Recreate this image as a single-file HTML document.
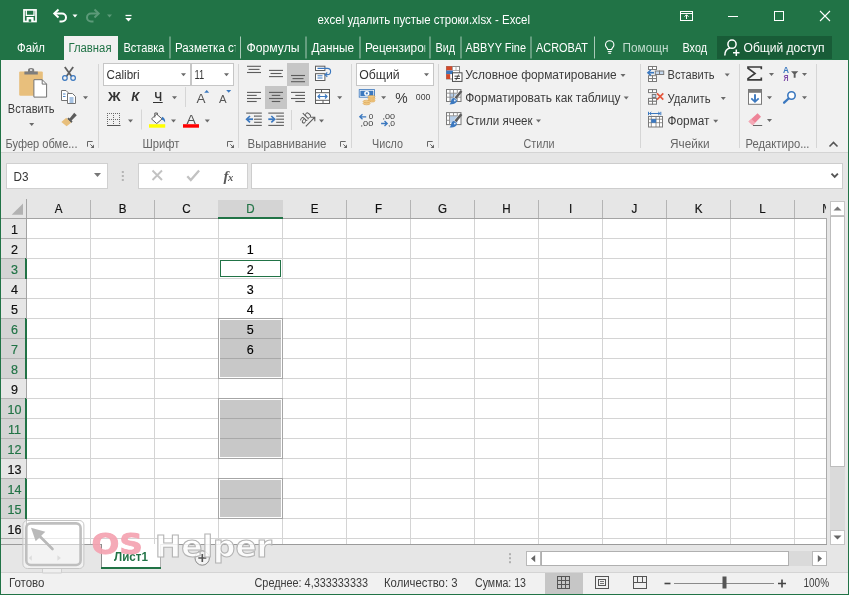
<!DOCTYPE html>
<html lang="ru">
<head>
<meta charset="utf-8">
<title>excel удалить пустые строки.xlsx - Excel</title>
<style>
html,body{margin:0;padding:0;}
body{width:849px;height:595px;overflow:hidden;background:#e6e6e6;font-family:"Liberation Sans",sans-serif;}
#app{position:relative;width:849px;height:595px;overflow:hidden;background:#e6e6e6;}
#app div{position:absolute;box-sizing:border-box;}
#ov{will-change:transform;position:absolute;left:0;top:0;width:849px;height:595px;font-family:"Liberation Sans",sans-serif;font-size:12.3px;fill:#3c3c3c;}
</style>
</head>
<body>
<div id="app">
<div style="left:0px;top:0px;width:849px;height:60px;background:#217346;"></div>
<div style="left:64px;top:36px;width:54px;height:24px;background:#f1f1f1;"></div>
<div style="left:717px;top:36px;width:115px;height:23px;background:#185c37;"></div>
<div style="left:0px;top:60px;width:849px;height:93px;background:#f1f1f1;border-bottom:1px solid #d4d4d4;"></div>
<div style="left:6px;top:163px;width:102px;height:26px;background:#fff;border:1px solid #d0d0d0;"></div>
<div style="left:138px;top:163px;width:110px;height:26px;background:#fff;border:1px solid #d0d0d0;"></div>
<div style="left:251px;top:163px;width:592px;height:26px;background:#fff;border:1px solid #cdcdcd;"></div>
<div style="left:26px;top:218px;width:800px;height:326px;background:#fff;"></div>
<div style="left:1px;top:218px;width:25px;height:326px;background:#e6e6e6;"></div>
<div style="left:90px;top:218px;width:1px;height:326px;background:#d4d4d4;"></div>
<div style="left:90px;top:200px;width:1px;height:18px;background:#b4b4b4;"></div>
<div style="left:154px;top:218px;width:1px;height:326px;background:#d4d4d4;"></div>
<div style="left:154px;top:200px;width:1px;height:18px;background:#b4b4b4;"></div>
<div style="left:218px;top:218px;width:1px;height:326px;background:#d4d4d4;"></div>
<div style="left:218px;top:200px;width:1px;height:18px;background:#b4b4b4;"></div>
<div style="left:282px;top:218px;width:1px;height:326px;background:#d4d4d4;"></div>
<div style="left:282px;top:200px;width:1px;height:18px;background:#b4b4b4;"></div>
<div style="left:346px;top:218px;width:1px;height:326px;background:#d4d4d4;"></div>
<div style="left:346px;top:200px;width:1px;height:18px;background:#b4b4b4;"></div>
<div style="left:410px;top:218px;width:1px;height:326px;background:#d4d4d4;"></div>
<div style="left:410px;top:200px;width:1px;height:18px;background:#b4b4b4;"></div>
<div style="left:474px;top:218px;width:1px;height:326px;background:#d4d4d4;"></div>
<div style="left:474px;top:200px;width:1px;height:18px;background:#b4b4b4;"></div>
<div style="left:538px;top:218px;width:1px;height:326px;background:#d4d4d4;"></div>
<div style="left:538px;top:200px;width:1px;height:18px;background:#b4b4b4;"></div>
<div style="left:602px;top:218px;width:1px;height:326px;background:#d4d4d4;"></div>
<div style="left:602px;top:200px;width:1px;height:18px;background:#b4b4b4;"></div>
<div style="left:666px;top:218px;width:1px;height:326px;background:#d4d4d4;"></div>
<div style="left:666px;top:200px;width:1px;height:18px;background:#b4b4b4;"></div>
<div style="left:730px;top:218px;width:1px;height:326px;background:#d4d4d4;"></div>
<div style="left:730px;top:200px;width:1px;height:18px;background:#b4b4b4;"></div>
<div style="left:794px;top:218px;width:1px;height:326px;background:#d4d4d4;"></div>
<div style="left:794px;top:200px;width:1px;height:18px;background:#b4b4b4;"></div>
<div style="left:26px;top:238px;width:800px;height:1px;background:#d4d4d4;"></div>
<div style="left:1px;top:238px;width:25px;height:1px;background:#ababab;"></div>
<div style="left:26px;top:258px;width:800px;height:1px;background:#d4d4d4;"></div>
<div style="left:1px;top:258px;width:25px;height:1px;background:#ababab;"></div>
<div style="left:26px;top:278px;width:800px;height:1px;background:#d4d4d4;"></div>
<div style="left:1px;top:278px;width:25px;height:1px;background:#ababab;"></div>
<div style="left:26px;top:298px;width:800px;height:1px;background:#d4d4d4;"></div>
<div style="left:1px;top:298px;width:25px;height:1px;background:#ababab;"></div>
<div style="left:26px;top:318px;width:800px;height:1px;background:#d4d4d4;"></div>
<div style="left:1px;top:318px;width:25px;height:1px;background:#ababab;"></div>
<div style="left:26px;top:338px;width:800px;height:1px;background:#d4d4d4;"></div>
<div style="left:1px;top:338px;width:25px;height:1px;background:#ababab;"></div>
<div style="left:26px;top:358px;width:800px;height:1px;background:#d4d4d4;"></div>
<div style="left:1px;top:358px;width:25px;height:1px;background:#ababab;"></div>
<div style="left:26px;top:378px;width:800px;height:1px;background:#d4d4d4;"></div>
<div style="left:1px;top:378px;width:25px;height:1px;background:#ababab;"></div>
<div style="left:26px;top:398px;width:800px;height:1px;background:#d4d4d4;"></div>
<div style="left:1px;top:398px;width:25px;height:1px;background:#ababab;"></div>
<div style="left:26px;top:418px;width:800px;height:1px;background:#d4d4d4;"></div>
<div style="left:1px;top:418px;width:25px;height:1px;background:#ababab;"></div>
<div style="left:26px;top:438px;width:800px;height:1px;background:#d4d4d4;"></div>
<div style="left:1px;top:438px;width:25px;height:1px;background:#ababab;"></div>
<div style="left:26px;top:458px;width:800px;height:1px;background:#d4d4d4;"></div>
<div style="left:1px;top:458px;width:25px;height:1px;background:#ababab;"></div>
<div style="left:26px;top:478px;width:800px;height:1px;background:#d4d4d4;"></div>
<div style="left:1px;top:478px;width:25px;height:1px;background:#ababab;"></div>
<div style="left:26px;top:498px;width:800px;height:1px;background:#d4d4d4;"></div>
<div style="left:1px;top:498px;width:25px;height:1px;background:#ababab;"></div>
<div style="left:26px;top:518px;width:800px;height:1px;background:#d4d4d4;"></div>
<div style="left:1px;top:518px;width:25px;height:1px;background:#ababab;"></div>
<div style="left:26px;top:538px;width:800px;height:1px;background:#d4d4d4;"></div>
<div style="left:1px;top:538px;width:25px;height:1px;background:#ababab;"></div>
<div style="left:218px;top:200px;width:65px;height:18px;background:#d4d4d4;"></div>
<div style="left:1px;top:258px;width:25px;height:21px;background:#d4d4d4;"></div>
<div style="left:1px;top:318px;width:25px;height:21px;background:#d4d4d4;"></div>
<div style="left:1px;top:338px;width:25px;height:21px;background:#d4d4d4;"></div>
<div style="left:1px;top:358px;width:25px;height:21px;background:#d4d4d4;"></div>
<div style="left:1px;top:398px;width:25px;height:21px;background:#d4d4d4;"></div>
<div style="left:1px;top:418px;width:25px;height:21px;background:#d4d4d4;"></div>
<div style="left:1px;top:438px;width:25px;height:21px;background:#d4d4d4;"></div>
<div style="left:1px;top:478px;width:25px;height:21px;background:#d4d4d4;"></div>
<div style="left:1px;top:498px;width:25px;height:21px;background:#d4d4d4;"></div>
<div style="left:1px;top:278px;width:25px;height:1px;background:#b4b4b4;"></div>
<div style="left:1px;top:258px;width:25px;height:1px;background:#b4b4b4;"></div>
<div style="left:1px;top:338px;width:25px;height:1px;background:#b4b4b4;"></div>
<div style="left:1px;top:318px;width:25px;height:1px;background:#b4b4b4;"></div>
<div style="left:1px;top:358px;width:25px;height:1px;background:#b4b4b4;"></div>
<div style="left:1px;top:338px;width:25px;height:1px;background:#b4b4b4;"></div>
<div style="left:1px;top:378px;width:25px;height:1px;background:#b4b4b4;"></div>
<div style="left:1px;top:358px;width:25px;height:1px;background:#b4b4b4;"></div>
<div style="left:1px;top:418px;width:25px;height:1px;background:#b4b4b4;"></div>
<div style="left:1px;top:398px;width:25px;height:1px;background:#b4b4b4;"></div>
<div style="left:1px;top:438px;width:25px;height:1px;background:#b4b4b4;"></div>
<div style="left:1px;top:418px;width:25px;height:1px;background:#b4b4b4;"></div>
<div style="left:1px;top:458px;width:25px;height:1px;background:#b4b4b4;"></div>
<div style="left:1px;top:438px;width:25px;height:1px;background:#b4b4b4;"></div>
<div style="left:1px;top:498px;width:25px;height:1px;background:#b4b4b4;"></div>
<div style="left:1px;top:478px;width:25px;height:1px;background:#b4b4b4;"></div>
<div style="left:1px;top:518px;width:25px;height:1px;background:#b4b4b4;"></div>
<div style="left:1px;top:498px;width:25px;height:1px;background:#b4b4b4;"></div>
<div style="left:25px;top:258px;width:2px;height:21px;background:#217346;"></div>
<div style="left:25px;top:318px;width:2px;height:61px;background:#217346;"></div>
<div style="left:25px;top:398px;width:2px;height:61px;background:#217346;"></div>
<div style="left:25px;top:478px;width:2px;height:41px;background:#217346;"></div>
<div style="left:1px;top:218px;width:825px;height:1px;background:#a3a3a3;"></div>
<div style="left:26px;top:199px;width:1px;height:345px;background:#a3a3a3;"></div>
<div style="left:826px;top:218px;width:1px;height:327px;background:#ababab;"></div>
<div style="left:1px;top:544px;width:826px;height:1px;background:#9b9b9b;"></div>
<div style="left:218px;top:217px;width:65px;height:2px;background:#217346;"></div>
<div style="left:25px;top:259px;width:2px;height:20px;background:#217346;"></div>
<div style="left:25px;top:319px;width:2px;height:60px;background:#217346;"></div>
<div style="left:25px;top:399px;width:2px;height:60px;background:#217346;"></div>
<div style="left:25px;top:479px;width:2px;height:40px;background:#217346;"></div>
<div style="left:218px;top:318px;width:65px;height:61px;background:#fff;border:1px solid #a6a6a6;"></div>
<div style="left:220px;top:320px;width:61px;height:57px;background:#c8c8c8;"></div>
<div style="left:220px;top:338px;width:61px;height:1px;background:#a9a9a9;"></div>
<div style="left:220px;top:358px;width:61px;height:1px;background:#a9a9a9;"></div>
<div style="left:218px;top:398px;width:65px;height:61px;background:#fff;border:1px solid #a6a6a6;"></div>
<div style="left:220px;top:400px;width:61px;height:57px;background:#c8c8c8;"></div>
<div style="left:220px;top:418px;width:61px;height:1px;background:#a9a9a9;"></div>
<div style="left:220px;top:438px;width:61px;height:1px;background:#a9a9a9;"></div>
<div style="left:218px;top:478px;width:65px;height:41px;background:#fff;border:1px solid #a6a6a6;"></div>
<div style="left:220px;top:480px;width:61px;height:37px;background:#c8c8c8;"></div>
<div style="left:220px;top:498px;width:61px;height:1px;background:#a9a9a9;"></div>
<div style="left:219px;top:259px;width:63px;height:19px;background:#fff;"></div>
<div style="left:220px;top:260px;width:61px;height:17px;background:#fff;border:1px solid #217346;"></div>
<div style="left:828px;top:200px;width:20px;height:345px;background:#e6e6e6;"></div>
<div style="left:830px;top:216px;width:15px;height:314px;background:#dadada;"></div>
<div style="left:830px;top:201px;width:15px;height:15px;background:#fff;border:1px solid #c4c4c4;"></div>
<div style="left:830px;top:216px;width:15px;height:251px;background:#fff;border:1px solid #bdbdbd;"></div>
<div style="left:830px;top:530px;width:15px;height:15px;background:#fff;border:1px solid #c4c4c4;"></div>
<div style="left:0px;top:60px;width:1px;height:535px;background:#217346;"></div>
<div style="left:848px;top:60px;width:1px;height:535px;background:#217346;"></div>
<div style="left:0px;top:594px;width:849px;height:1px;background:#217346;"></div>
<div style="left:103px;top:63px;width:88px;height:23px;background:#fff;border:1px solid #c6c6c6;"></div>
<div style="left:191px;top:63px;width:43px;height:23px;background:#fff;border:1px solid #c6c6c6;"></div>
<div style="left:287px;top:63px;width:22px;height:23px;background:#c6c6c6;"></div>
<div style="left:265px;top:86px;width:22px;height:23px;background:#c6c6c6;"></div>
<div style="left:356px;top:63px;width:78px;height:23px;background:#fff;border:1px solid #c6c6c6;"></div>
<div style="left:101px;top:544px;width:60px;height:25px;background:#fff;border-left:1px solid #8c8c8c;border-right:1px solid #b0b0b0;"></div>
<div style="left:101px;top:567px;width:60px;height:2px;background:#217346;"></div>
<div style="left:526px;top:551px;width:15px;height:15px;background:#fff;border:1px solid #b9b9b9;"></div>
<div style="left:541px;top:551px;width:271px;height:15px;background:#dadada;"></div>
<div style="left:541px;top:551px;width:248px;height:15px;background:#fff;border:1px solid #b0b0b0;"></div>
<div style="left:812px;top:551px;width:15px;height:15px;background:#fff;border:1px solid #b9b9b9;"></div>
<div style="left:1px;top:572px;width:847px;height:22px;background:#f1f1f1;border-top:1px solid #d4d4d4;"></div>
<div style="left:545px;top:573px;width:38px;height:21px;background:#c6c6c6;"></div>
<svg id="ov" width="849" height="595" viewBox="0 0 849 595">
<text x="317.5" y="24" fill="#fff" textLength="212.5" lengthAdjust="spacingAndGlyphs">excel удалить пустые строки.xlsx - Excel</text>
<g><rect x="24" y="9.900" width="12" height="11.600" fill="none" stroke="#fff" stroke-width="1.700"/><path d="M26.300 10v5.300h7.700v-5.300" fill="none" stroke="#fff" stroke-width="1.300"/><rect x="26.600" y="17" width="7" height="4.500" fill="#fff"/><rect x="28.700" y="19.300" width="2.500" height="2.500" fill="#217346"/></g>
<g fill="none" stroke="#fff" stroke-width="2"><path d="M55 13.5h7a4 4 0 0 1 0 8h-2.5" /><path d="M58.5 9.5l-4.2 4 4.2 4" /></g>
<path d="M72.5 14.5h5l-2.5 3.0z" fill="#fff"/>
<g fill="none" stroke="#5c9a79" stroke-width="2"><path d="M98 13.5h-7a4 4 0 0 0 0 8h2.5" /><path d="M94.5 9.5l4.2 4 -4.2 4" /></g>
<path d="M107 14.5h5l-2.5 3.0z" fill="#5c9a79"/>
<path d="M125.5 15.5h6" stroke="#fff" stroke-width="1.3"/>
<path d="M125.3 18h6.4l-3.2 3.4z" fill="#fff"/>
<g fill="none" stroke="#fff" stroke-width="1"><rect x="680.5" y="11.5" width="12" height="9"/><path d="M680.5 13.5h12" /><path d="M686.5 19v-4M684.5 16.7l2-2 2 2"/></g>
<path d="M728 16.5h10" stroke="#fff" stroke-width="1"/>
<rect x="774.5" y="11.5" width="9" height="9" fill="none" stroke="#fff"/>
<path d="M820 11l10 10M830 11l-10 10" stroke="#fff" stroke-width="1.1"/>
<text x="17" y="52" fill="#fff" textLength="28" lengthAdjust="spacingAndGlyphs">Файл</text>
<text x="68.5" y="52" fill="#217346" textLength="43" lengthAdjust="spacingAndGlyphs">Главная</text>
<text x="123.5" y="52" fill="#fff" textLength="41" lengthAdjust="spacingAndGlyphs">Вставка</text>
<text x="175" y="52" fill="#fff" textLength="70.5" lengthAdjust="spacingAndGlyphs" clip-path="url(#cl1)">Разметка стр</text>
<text x="246.5" y="52" fill="#fff" textLength="53" lengthAdjust="spacingAndGlyphs">Формулы</text>
<text x="311.5" y="52" fill="#fff" textLength="42.5" lengthAdjust="spacingAndGlyphs">Данные</text>
<text x="365" y="52" fill="#fff" textLength="65" lengthAdjust="spacingAndGlyphs" clip-path="url(#cl2)">Рецензиров</text>
<text x="435.5" y="52" fill="#fff" textLength="19.5" lengthAdjust="spacingAndGlyphs">Вид</text>
<text x="465.5" y="52" fill="#fff" textLength="60.5" lengthAdjust="spacingAndGlyphs">ABBYY Fine</text>
<text x="536" y="52" fill="#fff" textLength="52" lengthAdjust="spacingAndGlyphs">ACROBAT</text>
<text x="622.5" y="52" fill="#c3ddd0" textLength="52.5" lengthAdjust="spacingAndGlyphs" clip-path="url(#cl3)">Помощни</text>
<text x="682.5" y="52" fill="#fff" textLength="24.5" lengthAdjust="spacingAndGlyphs">Вход</text>
<text x="743.5" y="52" fill="#fff" textLength="81" lengthAdjust="spacingAndGlyphs">Общий доступ</text>
<path d="M170 36.5v22" stroke="#a9cab8" stroke-width="1"/>
<path d="M240.5 36.5v22" stroke="#a9cab8" stroke-width="1"/>
<path d="M306 36.5v22" stroke="#a9cab8" stroke-width="1"/>
<path d="M360 36.5v22" stroke="#a9cab8" stroke-width="1"/>
<path d="M430 36.5v22" stroke="#a9cab8" stroke-width="1"/>
<path d="M461 36.5v22" stroke="#a9cab8" stroke-width="1"/>
<path d="M531 36.5v22" stroke="#a9cab8" stroke-width="1"/>
<path d="M594.5 36.5v22" stroke="#a9cab8" stroke-width="1"/>
<defs><clipPath id="cl1"><rect x="170" y="36" width="65.800" height="24"/></clipPath><clipPath id="cl2"><rect x="360" y="36" width="65.200" height="24"/></clipPath><clipPath id="cl3"><rect x="600" y="36" width="68.700" height="24"/></clipPath></defs>
<g fill="none" stroke="#fff" stroke-width="1.1"><path d="M607.8 49.5c0-1.6-2.3-2.4-2.3-4.6a4.2 4.2 0 0 1 8.4 0c0 2.2-2.3 3-2.3 4.6z"/><path d="M607.8 51.5h3.8M608.3 53.3h2.8"/></g>
<g fill="none" stroke="#fff" stroke-width="1.500"><circle cx="732" cy="44.200" r="4.100"/><path d="M724.800 55.500c0-4.200 2.300-7 5.300-7.600M733 52.800h6.500M736.300 49.500v6.500"/></g>
<text x="13.5" y="180.6" fill="#333" textLength="15" lengthAdjust="spacingAndGlyphs">D3</text>
<path d="M94 173h7l-3.5 4.0z" fill="#777"/>
<rect x="121.800" y="171" width="2" height="2" fill="#b4b4b4"/>
<rect x="121.800" y="175" width="2" height="2" fill="#b4b4b4"/>
<rect x="121.800" y="179" width="2" height="2" fill="#b4b4b4"/>
<path d="M152.500 170.500l9.500 9.500M162 170.500l-9.500 9.500" stroke="#c2c2c2" stroke-width="1.900" fill="none"/>
<path d="M187.300 176.300l3.500 3.700 8.300-9.500" stroke="#c2c2c2" stroke-width="2.300" fill="none"/>
<text x="223.500" y="180.500" font-size="15" fill="#5a5a5a" font-style="italic" font-weight="bold" font-family="Liberation Serif,serif">f<tspan font-size="10.500" dx="-0.500">x</tspan></text>
<path d="M831.500 173.600l3.200 3.200 3.200-3.200" stroke="#555" stroke-width="1.900" fill="none"/>
<path d="M23 203.500v11.200h-11.300z" fill="#b2b2b2"/>
<text transform="translate(58.5 213) scale(0.860 1)" font-size="13.500" fill="#111" stroke="#111" stroke-width="0.200" text-anchor="middle">A</text>
<text transform="translate(122.5 213) scale(0.860 1)" font-size="13.500" fill="#111" stroke="#111" stroke-width="0.200" text-anchor="middle">B</text>
<text transform="translate(186.5 213) scale(0.860 1)" font-size="13.500" fill="#111" stroke="#111" stroke-width="0.200" text-anchor="middle">C</text>
<text transform="translate(250.5 213) scale(0.860 1)" font-size="13.500" fill="#217346" stroke="#217346" stroke-width="0.200" text-anchor="middle">D</text>
<text transform="translate(314.5 213) scale(0.860 1)" font-size="13.500" fill="#111" stroke="#111" stroke-width="0.200" text-anchor="middle">E</text>
<text transform="translate(378.5 213) scale(0.860 1)" font-size="13.500" fill="#111" stroke="#111" stroke-width="0.200" text-anchor="middle">F</text>
<text transform="translate(442.5 213) scale(0.860 1)" font-size="13.500" fill="#111" stroke="#111" stroke-width="0.200" text-anchor="middle">G</text>
<text transform="translate(506.5 213) scale(0.860 1)" font-size="13.500" fill="#111" stroke="#111" stroke-width="0.200" text-anchor="middle">H</text>
<text transform="translate(570.5 213) scale(0.860 1)" font-size="13.500" fill="#111" stroke="#111" stroke-width="0.200" text-anchor="middle">I</text>
<text transform="translate(634.5 213) scale(0.860 1)" font-size="13.500" fill="#111" stroke="#111" stroke-width="0.200" text-anchor="middle">J</text>
<text transform="translate(698.5 213) scale(0.860 1)" font-size="13.500" fill="#111" stroke="#111" stroke-width="0.200" text-anchor="middle">K</text>
<text transform="translate(762.5 213) scale(0.860 1)" font-size="13.500" fill="#111" stroke="#111" stroke-width="0.200" text-anchor="middle">L</text>
<text x="822" y="213" font-size="13.5" fill="#262626" clip-path="url(#clipM)">M</text>
<defs><clipPath id="clipM"><rect x="815" y="200" width="11" height="18"/></clipPath></defs>
<text transform="translate(14.500 234.3) scale(0.930 1)" font-size="13.500" fill="#111" stroke="#111" stroke-width="0.200" text-anchor="middle">1</text>
<text transform="translate(14.500 254.3) scale(0.930 1)" font-size="13.500" fill="#111" stroke="#111" stroke-width="0.200" text-anchor="middle">2</text>
<text transform="translate(14.500 274.3) scale(0.930 1)" font-size="13.500" fill="#217346" stroke="#217346" stroke-width="0.200" text-anchor="middle">3</text>
<text transform="translate(14.500 294.3) scale(0.930 1)" font-size="13.500" fill="#111" stroke="#111" stroke-width="0.200" text-anchor="middle">4</text>
<text transform="translate(14.500 314.3) scale(0.930 1)" font-size="13.500" fill="#111" stroke="#111" stroke-width="0.200" text-anchor="middle">5</text>
<text transform="translate(14.500 334.3) scale(0.930 1)" font-size="13.500" fill="#217346" stroke="#217346" stroke-width="0.200" text-anchor="middle">6</text>
<text transform="translate(14.500 354.3) scale(0.930 1)" font-size="13.500" fill="#217346" stroke="#217346" stroke-width="0.200" text-anchor="middle">7</text>
<text transform="translate(14.500 374.3) scale(0.930 1)" font-size="13.500" fill="#217346" stroke="#217346" stroke-width="0.200" text-anchor="middle">8</text>
<text transform="translate(14.500 394.3) scale(0.930 1)" font-size="13.500" fill="#111" stroke="#111" stroke-width="0.200" text-anchor="middle">9</text>
<text transform="translate(14.500 414.3) scale(0.930 1)" font-size="13.500" fill="#217346" stroke="#217346" stroke-width="0.200" text-anchor="middle">10</text>
<text transform="translate(14.500 434.3) scale(0.930 1)" font-size="13.500" fill="#217346" stroke="#217346" stroke-width="0.200" text-anchor="middle">11</text>
<text transform="translate(14.500 454.3) scale(0.930 1)" font-size="13.500" fill="#217346" stroke="#217346" stroke-width="0.200" text-anchor="middle">12</text>
<text transform="translate(14.500 474.3) scale(0.930 1)" font-size="13.500" fill="#111" stroke="#111" stroke-width="0.200" text-anchor="middle">13</text>
<text transform="translate(14.500 494.3) scale(0.930 1)" font-size="13.500" fill="#217346" stroke="#217346" stroke-width="0.200" text-anchor="middle">14</text>
<text transform="translate(14.500 514.3) scale(0.930 1)" font-size="13.500" fill="#217346" stroke="#217346" stroke-width="0.200" text-anchor="middle">15</text>
<text transform="translate(14.500 534.3) scale(0.930 1)" font-size="13.500" fill="#111" stroke="#111" stroke-width="0.200" text-anchor="middle">16</text>
<text transform="translate(250.300 254.3) scale(0.930 1)" font-size="13.500" fill="#000" stroke="#000" stroke-width="0.150" text-anchor="middle">1</text>
<text transform="translate(250.300 274.3) scale(0.930 1)" font-size="13.500" fill="#000" stroke="#000" stroke-width="0.150" text-anchor="middle">2</text>
<text transform="translate(250.300 294.3) scale(0.930 1)" font-size="13.500" fill="#000" stroke="#000" stroke-width="0.150" text-anchor="middle">3</text>
<text transform="translate(250.300 314.3) scale(0.930 1)" font-size="13.500" fill="#000" stroke="#000" stroke-width="0.150" text-anchor="middle">4</text>
<text transform="translate(250.300 334.3) scale(0.930 1)" font-size="13.500" fill="#000" stroke="#000" stroke-width="0.150" text-anchor="middle">5</text>
<text transform="translate(250.300 354.3) scale(0.930 1)" font-size="13.500" fill="#000" stroke="#000" stroke-width="0.150" text-anchor="middle">6</text>
<path d="M833.5 210.5h8l-4-4z" fill="#777"/>
<path d="M833.5 535.5h8l-4 4z" fill="#666"/>
<path d="M98.5 64v84" stroke="#d6d6d6" stroke-width="1"/>
<path d="M238.5 64v84" stroke="#d6d6d6" stroke-width="1"/>
<path d="M351.5 64v84" stroke="#d6d6d6" stroke-width="1"/>
<path d="M438.5 64v84" stroke="#d6d6d6" stroke-width="1"/>
<path d="M640.5 64v84" stroke="#d6d6d6" stroke-width="1"/>
<path d="M739.5 64v84" stroke="#d6d6d6" stroke-width="1"/>
<path d="M816.5 64v84" stroke="#d6d6d6" stroke-width="1"/>
<text x="5.5" y="148" fill="#666" textLength="72" lengthAdjust="spacingAndGlyphs">Буфер обме...</text>
<text x="142.5" y="148" fill="#666" textLength="37" lengthAdjust="spacingAndGlyphs">Шрифт</text>
<text x="247.5" y="148" fill="#666" textLength="79" lengthAdjust="spacingAndGlyphs">Выравнивание</text>
<text x="372" y="148" fill="#666" textLength="31" lengthAdjust="spacingAndGlyphs">Число</text>
<text x="523.5" y="148" fill="#666" textLength="31" lengthAdjust="spacingAndGlyphs">Стили</text>
<text x="670" y="148" fill="#666" textLength="39.5" lengthAdjust="spacingAndGlyphs">Ячейки</text>
<text x="745.5" y="148" fill="#666" textLength="64" lengthAdjust="spacingAndGlyphs">Редактиро...</text>
<g><path d="M87.5 146.7V141.5H92.7" fill="none" stroke="#666" stroke-width="1"/><path d="M90.3 144.3l2.500 2.500" stroke="#666" stroke-width="1" fill="none"/><path d="M94 144.6V148H90.6z" fill="#666"/></g>
<g><path d="M227.5 146.7V141.5H232.7" fill="none" stroke="#666" stroke-width="1"/><path d="M230.3 144.3l2.500 2.500" stroke="#666" stroke-width="1" fill="none"/><path d="M234 144.6V148H230.6z" fill="#666"/></g>
<g><path d="M340.5 146.7V141.5H345.7" fill="none" stroke="#666" stroke-width="1"/><path d="M343.3 144.3l2.500 2.500" stroke="#666" stroke-width="1" fill="none"/><path d="M347 144.6V148H343.6z" fill="#666"/></g>
<g><path d="M427.5 146.7V141.5H432.7" fill="none" stroke="#666" stroke-width="1"/><path d="M430.3 144.3l2.500 2.500" stroke="#666" stroke-width="1" fill="none"/><path d="M434 144.6V148H430.6z" fill="#666"/></g>
<path d="M829.5 146.5l4-4 4 4" fill="none" stroke="#555" stroke-width="1.6"/>
<rect x="19.2" y="71.4" width="23.6" height="24.4" rx="1.2" fill="#e8bf7c"/>
<path d="M24.4 74.5v-3h3.6v-1.400a3.100 2.200 0 0 1 6.200 0v1.400h3.600v3z" fill="#7d7d7d"/>
<rect x="30" y="69.300" width="2.200" height="1.500" fill="#f1f1f1"/>
<path d="M33.900 79.700h8.300l4.400 4.400v13h-12.700z" fill="#fff" stroke="#737373" stroke-width="1"/>
<path d="M42.200 79.700v4.400h4.400" fill="none" stroke="#737373" stroke-width="1"/>
<text x="7.8" y="113" textLength="46.6" lengthAdjust="spacingAndGlyphs">Вставить</text>
<path d="M29.2 123h5l-2.5 3.0z" fill="#6a6a6a"/>
<g fill="none"><path d="M64.800 67l6.700 9.200M73.200 67l-6.700 9.200" stroke="#5f5f5f" stroke-width="1.800"/><circle cx="64.900" cy="78" r="2.300" stroke="#3b78bf" stroke-width="1.200"/><circle cx="73.100" cy="78" r="2.300" stroke="#3b78bf" stroke-width="1.200"/></g>
<g fill="#fff" stroke="#737373" stroke-width="1"><path d="M61.500 90.500h4.500l2.500 2.500v7.500h-7z"/><path d="M67.500 93.500h5l3 3v7h-8z"/></g>
<path d="M63 94h2.500M63 96.500h2.500M69.500 98h4M69.500 100h4M69.500 102h4" stroke="#3b78bf" stroke-width="0.900"/>
<path d="M83 96.3h5l-2.5 3.0z" fill="#6a6a6a"/>
<path d="M74.200 112.800l2.600 2.400-5.200 5.200 1 1-1.500 1.500-4-4 1.500-1.500 1 1z" fill="#5c5c5c"/>
<path d="M66.200 117.800l4.900 4.900-4.500 3.600-5.200-4.300z" fill="#e8bf7c"/>
<text x="106.6" y="78.5" fill="#333" textLength="33" lengthAdjust="spacingAndGlyphs">Calibri</text>
<path d="M181 73.2h5l-2.5 3.0z" fill="#6a6a6a"/>
<text x="194.5" y="78.5" fill="#333" textLength="9.7" lengthAdjust="spacingAndGlyphs">11</text>
<path d="M224 73.2h5l-2.5 3.0z" fill="#6a6a6a"/>
<text x="108" y="100.7" fill="#333" font-weight="bold" textLength="12.6" lengthAdjust="spacingAndGlyphs">Ж</text>
<text x="131.3" y="100.7" fill="#333" font-weight="bold" font-style="italic" textLength="8" lengthAdjust="spacingAndGlyphs">К</text>
<text x="154.4" y="100.7" fill="#333" font-weight="bold" textLength="7.5" lengthAdjust="spacingAndGlyphs">Ч</text>
<path d="M153 102.500h9.700" stroke="#333" stroke-width="1"/>
<path d="M172 96.3h5l-2.5 3.0z" fill="#6a6a6a"/>
<path d="M185.500 87v20" stroke="#d6d6d6"/>
<text x="196.5" y="102.5" font-size="13.3" fill="#555" textLength="9" lengthAdjust="spacingAndGlyphs">A</text>
<path d="M204.200 92.700h5l-2.500-2.800z" fill="#3b78bf"/>
<text x="219" y="102.5" font-size="10" fill="#555" textLength="7.6" lengthAdjust="spacingAndGlyphs">A</text>
<path d="M226.200 90h5l-2.500 2.800z" fill="#3b78bf"/>
<g stroke="#6a6a6a" stroke-width="1" stroke-dasharray="1 1" fill="none"><path d="M107 113.500h13M107 119.500h13M107.500 113v12M113.500 113v12M119.500 113v12"/></g>
<path d="M107 125.500h13.500" stroke="#555" stroke-width="1"/>
<path d="M128 119.4h5l-2.5 3.0z" fill="#6a6a6a"/>
<path d="M141.500 109.500v20" stroke="#d6d6d6"/>
<path d="M156.700 114.200l5.400 4.700-5.400 4.700-5.200-4.700z" fill="#fff" stroke="#5f5f5f" stroke-width="1"/>
<path d="M154.800 117.500v-4.500h2.600v2" fill="none" stroke="#5f5f5f" stroke-width="1"/>
<path d="M162 116.800c2.200 0.600 3.400 2.700 3.100 5.600-1-1.700-2-2.500-3.500-3z" fill="#3b78bf"/>
<rect x="149" y="124.200" width="16.200" height="3.500" fill="#ffff00"/>
<path d="M171 119.4h5l-2.5 3.0z" fill="#6a6a6a"/>
<text x="186.6" y="123.5" font-size="12.5" fill="#555" textLength="9.4" lengthAdjust="spacingAndGlyphs">A</text>
<rect x="183" y="124.200" width="16" height="3.500" fill="#f00"/>
<path d="M204.8 119.4h5l-2.5 3.0z" fill="#6a6a6a"/>
<path d="M247.0 66.3h14" stroke="#5c5c5c" stroke-width="1.100"/>
<path d="M248.5 69.4h11" stroke="#5c5c5c" stroke-width="1.100"/>
<path d="M247.0 72.5h14" stroke="#5c5c5c" stroke-width="1.100"/>
<path d="M269.0 70.4h14" stroke="#5c5c5c" stroke-width="1.100"/>
<path d="M270.5 73.5h11" stroke="#5c5c5c" stroke-width="1.100"/>
<path d="M269.0 76.6h14" stroke="#5c5c5c" stroke-width="1.100"/>
<path d="M291.0 75.5h14" stroke="#5c5c5c" stroke-width="1.100"/>
<path d="M292.5 78.6h11" stroke="#5c5c5c" stroke-width="1.100"/>
<path d="M291.0 81.7h14" stroke="#5c5c5c" stroke-width="1.100"/>
<path d="M247 92.4h14" stroke="#5c5c5c" stroke-width="1.100"/>
<path d="M247 95.4h9.7" stroke="#5c5c5c" stroke-width="1.100"/>
<path d="M247 98.5h14" stroke="#5c5c5c" stroke-width="1.100"/>
<path d="M247 101.5h9.7" stroke="#5c5c5c" stroke-width="1.100"/>
<path d="M269.0 92.4h14" stroke="#5c5c5c" stroke-width="1.100"/>
<path d="M271.75 95.4h8.5" stroke="#5c5c5c" stroke-width="1.100"/>
<path d="M269.0 98.5h14" stroke="#5c5c5c" stroke-width="1.100"/>
<path d="M271.75 101.5h8.5" stroke="#5c5c5c" stroke-width="1.100"/>
<path d="M291 92.4h14" stroke="#5c5c5c" stroke-width="1.100"/>
<path d="M295.3 95.4h9.7" stroke="#5c5c5c" stroke-width="1.100"/>
<path d="M291 98.5h14" stroke="#5c5c5c" stroke-width="1.100"/>
<path d="M295.3 101.5h9.7" stroke="#5c5c5c" stroke-width="1.100"/>
<g fill="#fff" stroke="#5c5c5c" stroke-width="1"><rect x="315.500" y="66.200" width="9.400" height="4.300"/><rect x="315.500" y="73.700" width="9.400" height="6.800"/></g>
<path d="M317.500 68.400h10a2.900 2.900 0 0 1 0 6.200h-2" fill="none" stroke="#3b78bf" stroke-width="1.100"/><path d="M327.300 72.500l-2.300 2.200 2.300 2.200" fill="none" stroke="#3b78bf" stroke-width="1.100"/><path d="M317.500 75.800h5M317.500 78h5" stroke="#3b78bf" stroke-width="1"/>
<g fill="#fff" stroke="#5c5c5c" stroke-width="1"><rect x="315.500" y="89.500" width="14" height="14"/><path d="M315.500 92.700h14M315.500 100.300h14M321.500 89.500v3.200M323 100.300v3.200M319 100.300v0M326.500 92.700v0" fill="none"/></g>
<path d="M318 96.500h9M320 94.500l-2 2 2 2M325 94.500l2 2-2 2" fill="none" stroke="#3b78bf" stroke-width="1.200"/>
<path d="M337.2 96.3h5l-2.5 3.0z" fill="#6a6a6a"/>
<path d="M246.2 113.1h15.6" stroke="#5c5c5c" stroke-width="1.100"/>
<path d="M246.2 125.4h15.6" stroke="#5c5c5c" stroke-width="1.100"/>
<path d="M254 116.1h7.8" stroke="#5c5c5c" stroke-width="1.100"/>
<path d="M254 119.2h7.8" stroke="#5c5c5c" stroke-width="1.100"/>
<path d="M254 122.3h7.8" stroke="#5c5c5c" stroke-width="1.100"/>
<path d="M253 119.200h-5.500" fill="none" stroke="#3b78bf" stroke-width="1.800"/><path d="M250 116l-3.400 3.200 3.400 3.200" fill="none" stroke="#3b78bf" stroke-width="1.600"/>
<path d="M268.3 113.1h15.6" stroke="#5c5c5c" stroke-width="1.100"/>
<path d="M268.3 125.4h15.6" stroke="#5c5c5c" stroke-width="1.100"/>
<path d="M276.2 116.1h7.8" stroke="#5c5c5c" stroke-width="1.100"/>
<path d="M276.2 119.2h7.8" stroke="#5c5c5c" stroke-width="1.100"/>
<path d="M276.2 122.3h7.8" stroke="#5c5c5c" stroke-width="1.100"/>
<path d="M268.300 119.200h5.500" fill="none" stroke="#3b78bf" stroke-width="1.800"/><path d="M271.300 116l3.400 3.200-3.400 3.200" fill="none" stroke="#3b78bf" stroke-width="1.600"/>
<path d="M291.500 110v20" stroke="#d6d6d6"/>
<text x="0" y="0" font-size="11.500" fill="#555" transform="translate(303.200 124.600) rotate(-45)">ab</text>
<path d="M305.800 126.300l8.600-8.600M310.800 117.200h4v4" fill="none" stroke="#5c5c5c" stroke-width="1.100"/>
<path d="M319 119.4h5l-2.5 3.0z" fill="#6a6a6a"/>
<text x="359.3" y="78.8" fill="#333" textLength="40.3" lengthAdjust="spacingAndGlyphs">Общий</text>
<path d="M424 73.2h5l-2.5 3.0z" fill="#6a6a6a"/>
<rect x="358.800" y="89.200" width="16.100" height="8.400" fill="#3b78bf"/><rect x="360" y="90.400" width="13.700" height="6" fill="none" stroke="#fff" stroke-width="0.700"/><ellipse cx="366.800" cy="93.400" rx="2.600" ry="2.400" fill="#fff"/><circle cx="366.800" cy="93.400" r="1.100" fill="#3b78bf"/>
<g fill="#f0c987" stroke="#dca451" stroke-width="0.600"><ellipse cx="371.500" cy="100.800" rx="3.600" ry="1.300"/><ellipse cx="371.500" cy="98.800" rx="3.600" ry="1.300"/><ellipse cx="371.500" cy="96.800" rx="3.600" ry="1.300"/><ellipse cx="366.600" cy="103.500" rx="3.600" ry="1.300"/><ellipse cx="366.600" cy="101.500" rx="3.600" ry="1.300"/></g>
<path d="M381.1 96.3h5l-2.5 3.0z" fill="#6a6a6a"/>
<text x="395.3" y="102.8" font-size="15" textLength="12.4" lengthAdjust="spacingAndGlyphs">%</text>
<text x="415.8" y="99.5" font-size="8.6" textLength="14.5" lengthAdjust="spacingAndGlyphs">000</text>
<path d="M366.200 116.800h-6M362.500 114.300l-2.700 2.500 2.700 2.500" fill="none" stroke="#3b78bf" stroke-width="1.300"/>
<text x="368.8" y="119" font-size="7.5" textLength="4.5" lengthAdjust="spacingAndGlyphs">0</text>
<text x="360.5" y="125.5" font-size="7.5" textLength="12.8" lengthAdjust="spacingAndGlyphs">,00</text>
<text x="382.5" y="119" font-size="7.5" textLength="12.6" lengthAdjust="spacingAndGlyphs">,00</text>
<path d="M381.100 123.500h6M384.500 121l2.700 2.500-2.700 2.500" fill="none" stroke="#3b78bf" stroke-width="1.300"/>
<text x="388" y="125.5" font-size="7.5" textLength="7.1" lengthAdjust="spacingAndGlyphs">,0</text>
<text x="465.3" y="79.3" textLength="151.4" lengthAdjust="spacingAndGlyphs">Условное форматирование</text>
<path d="M620.5 74h5l-2.5 3.0z" fill="#6a6a6a"/>
<text x="465.3" y="102" textLength="155.2" lengthAdjust="spacingAndGlyphs">Форматировать как таблицу</text>
<path d="M623.7 96.6h5l-2.5 3.0z" fill="#6a6a6a"/>
<text x="465.9" y="124.8" textLength="66.7" lengthAdjust="spacingAndGlyphs">Стили ячеек</text>
<path d="M536 119.4h5l-2.5 3.0z" fill="#6a6a6a"/>
<g><rect x="446.500" y="66.500" width="13" height="12.500" fill="#fff" stroke="#8a8a8a"/><rect x="446.300" y="66.300" width="6.200" height="4.200" fill="#d4492a"/><rect x="446.300" y="70.500" width="6.700" height="3.600" fill="#3b78bf"/><rect x="446.300" y="74.100" width="3.900" height="4.900" fill="#d4492a"/><path d="M452.500 70.500h7M456 66.500v4M452.500 66.500v4" stroke="#9a9a9a" stroke-width="0.800" fill="none"/><rect x="452.500" y="72.800" width="9.500" height="8.600" fill="#fff" stroke="#4a4a4a"/><path d="M454.500 76.200h5.500M454.500 78.500h5.500M458.700 74.500l-2.800 5.700" stroke="#333" stroke-width="0.900" fill="none"/></g>
<g><rect x="446.500" y="89.5" width="14.500" height="12" fill="#fff" stroke="#7a7a7a"/><rect x="449.800" y="93.4" width="6.700" height="7.500" fill="#b5cde8"/><path d="M446.500 93.2h14.500M446.500 97.2h14.500M450 89.5v12M453.500 89.5v12M457.300 89.5v12" stroke="#8a8a8a" stroke-width="0.900" fill="none"/><path d="M462.300 91.5l-7 8.700-2.300-1.900 7-8.100z" fill="#f1f1f1"/><path d="M462.400 91.8l-6 7.300-1.900-1.600 6-7.300z" fill="#5c5c5c"/><path d="M454.300 98.0l2.200 1.800c1.500 2-1 4.500-7 4.700 1.500-1.200 1.300-3.600 2.300-5.200 0.600-0.900 1.600-1.300 2.500-1.300z" fill="#3b78bf"/><circle cx="454.800" cy="100.5" r="0.900" fill="#dfe9f6"/></g>
<g><rect x="446.500" y="112.6" width="14.500" height="12" fill="#fff" stroke="#7a7a7a"/><rect x="449.800" y="116.1" width="7.700" height="6.800" fill="#b5cde8"/><path d="M446.500 115.8h14.500M449.500 112.6v12" stroke="#8a8a8a" stroke-width="0.900" fill="none"/><path d="M446.500 120.3h3M453.500 112.6v3.200M457.300 112.6v3.200" stroke="#8a8a8a" stroke-width="0.900" fill="none"/><path d="M462.300 114.6l-7 8.700-2.300-1.900 7-8.100z" fill="#f1f1f1"/><path d="M462.400 114.89999999999999l-6 7.300-1.900-1.600 6-7.300z" fill="#5c5c5c"/><path d="M454.300 121.1l2.200 1.800c1.500 2-1 4.500-7 4.700 1.500-1.200 1.300-3.600 2.300-5.200 0.600-0.900 1.600-1.300 2.500-1.300z" fill="#3b78bf"/><circle cx="454.800" cy="123.6" r="0.900" fill="#dfe9f6"/></g>
<text x="667.6" y="79.3" textLength="47" lengthAdjust="spacingAndGlyphs">Вставить</text>
<path d="M724.7 73.5h5l-2.5 3.0z" fill="#6a6a6a"/>
<text x="667.6" y="102.5" textLength="43" lengthAdjust="spacingAndGlyphs">Удалить</text>
<path d="M720.8 97h5l-2.5 3.0z" fill="#6a6a6a"/>
<text x="667.6" y="125.3" textLength="41.8" lengthAdjust="spacingAndGlyphs">Формат</text>
<path d="M713.2 119.8h5l-2.5 3.0z" fill="#6a6a6a"/>
<g fill="#fff" stroke="#7a7a7a" stroke-width="1"><rect x="648.500" y="66.500" width="4" height="3"/><rect x="652.500" y="66.500" width="4" height="3"/><rect x="648.500" y="75.700" width="4" height="2.900"/><rect x="652.500" y="75.700" width="4" height="2.900"/><rect x="648.500" y="78.600" width="4" height="2.900"/><rect x="652.500" y="78.600" width="4" height="2.900"/><rect x="655.300" y="71" width="4.200" height="3.500" fill="#c4d8ef"/><rect x="659.500" y="71" width="4.200" height="3.500" fill="#c4d8ef"/></g>
<path d="M654 72.700h-5" fill="none" stroke="#3b78bf" stroke-width="1.700"/><path d="M650.800 70l-2.900 2.700 2.900 2.700" fill="none" stroke="#3b78bf" stroke-width="1.500"/>
<g fill="#fff" stroke="#7a7a7a" stroke-width="1"><rect x="648.500" y="89.600" width="4" height="3"/><rect x="652.500" y="89.600" width="4" height="3"/><rect x="648.500" y="98.400" width="4" height="2.900"/><rect x="652.500" y="98.400" width="4" height="2.900"/><rect x="648.500" y="101.300" width="4" height="2.900"/><rect x="652.500" y="101.300" width="4" height="2.900"/><rect x="652.300" y="94.500" width="3.500" height="3" fill="#c4d8ef"/></g>
<path d="M657 93.300l6.300 6.300M663.300 93.300l-6.300 6.300" stroke="#e4573d" stroke-width="1.700"/>
<g fill="#fff" stroke="#7a7a7a" stroke-width="1"><rect x="648.500" y="116.500" width="14" height="10.500"/><path d="M648.500 119.200h14M648.500 122.700h14M651.300 116.500v10.500M656 116.500v10.500M659.500 116.500v10.500" fill="none" stroke-width="0.800"/></g><rect x="651.200" y="119.100" width="4.900" height="3.700" fill="#3b78bf"/>
<path d="M648.500 111.800v3.400M660.800 111.800v3.400M649.500 113.500h10.500M651.300 112l-1.800 1.500 1.800 1.500M658.200 112l1.800 1.500-1.800 1.500" fill="none" stroke="#3b78bf" stroke-width="1"/>
<path d="M761.300 69.300v-2.300h-13.300v1.200l7 5.200-7 5.200v1.200h13.300v-2.300" fill="none" stroke="#3b3b3b" stroke-width="1.700"/>
<path d="M769 72.9h5l-2.5 3.0z" fill="#6a6a6a"/>
<text x="783" y="72.6" font-size="8.5" fill="#3b78bf" font-weight="bold" textLength="6" lengthAdjust="spacingAndGlyphs">А</text>
<text x="783.6" y="81.4" font-size="8.2" fill="#7d4aa8" font-weight="bold" textLength="5" lengthAdjust="spacingAndGlyphs">Я</text>
<path d="M791 71.300h7.300l-2.700 2.800v3.600h-1.900v-3.600z" fill="#5c5c5c"/>
<path d="M802 72.9h5l-2.5 3.0z" fill="#6a6a6a"/>
<rect x="748.500" y="89.500" width="13" height="14.800" fill="#fff" stroke="#7a7a7a"/><rect x="748" y="89" width="14" height="3.800" fill="#7a7a7a"/>
<path d="M755 94.300v7" fill="none" stroke="#3b78bf" stroke-width="1.900"/><path d="M751.300 98.300l3.700 3.600 3.700-3.600" fill="none" stroke="#3b78bf" stroke-width="1.700"/>
<path d="M767 96.3h5l-2.5 3.0z" fill="#6a6a6a"/>
<circle cx="791.500" cy="95.500" r="3.700" fill="#fff" stroke="#3b78bf" stroke-width="1.600"/><path d="M788.600 98.500l-4.500 4.200" stroke="#3b78bf" stroke-width="2.300" stroke-linecap="round"/>
<path d="M802 96.3h5l-2.5 3.0z" fill="#6a6a6a"/>
<path d="M757.600 113.300l3.400 3.400-8.300 8.500-4.200-3.600z" fill="#ee8498"/><path d="M751.300 119l3.900 3.600-2.500 2.600-4.200-3.600z" fill="#f5a9b6"/><path d="M753 125.500h9.200" stroke="#666" stroke-width="1"/>
<path d="M767 119.1h5l-2.5 3.0z" fill="#6a6a6a"/>
<text x="114" y="561" fill="#217346" font-weight="bold" textLength="34" lengthAdjust="spacingAndGlyphs">Лист1</text>
<circle cx="202.200" cy="558" r="7.200" fill="#f3f3f3" stroke="#8a8a8a" stroke-width="1"/><path d="M198.300 558h8M202.300 554v8" stroke="#555" stroke-width="1.600"/>
<rect x="509" y="553.2" width="2" height="2" fill="#b0b0b0"/>
<rect x="509" y="557.2" width="2" height="2" fill="#b0b0b0"/>
<rect x="509" y="561.2" width="2" height="2" fill="#b0b0b0"/>
<path d="M535.200 555v7.200l-4.200-3.600z" fill="#666"/>
<path d="M817.800 555v7.200l4.200-3.600z" fill="#666"/>
<text x="9" y="586.8" textLength="35.5" lengthAdjust="spacingAndGlyphs">Готово</text>
<text x="254.5" y="586.8" textLength="113.5" lengthAdjust="spacingAndGlyphs">Среднее: 4,333333333</text>
<text x="384" y="586.8" textLength="73.5" lengthAdjust="spacingAndGlyphs">Количество: 3</text>
<text x="475" y="586.8" textLength="51" lengthAdjust="spacingAndGlyphs">Сумма: 13</text>
<g fill="none" stroke="#555" stroke-width="1"><rect x="557.500" y="576.500" width="12" height="12"/><path d="M561.500 576.500v12M565.500 576.500v12M557.500 580.500h12M557.500 584.500h12"/></g>
<g fill="none" stroke="#555" stroke-width="1"><rect x="595.500" y="576.500" width="13" height="12"/><rect x="598.500" y="579.500" width="7" height="6"/><path d="M600 581.500h4M600 583.500h4" stroke-width="0.800"/></g>
<g fill="none" stroke="#555" stroke-width="1"><rect x="633.500" y="576.500" width="13" height="12"/><path d="M637.500 576.500v6h5v-6" /><path d="M633.500 582.500h13" /></g>
<path d="M664.500 583.500h6" stroke="#444" stroke-width="1.600"/>
<path d="M674 583.500h100" stroke="#8a8a8a" stroke-width="1"/>
<rect x="722.500" y="576.500" width="4" height="12" fill="#555"/>
<path d="M778 583.500h8M782 579.500v8" stroke="#444" stroke-width="1.600"/>
<text x="803.5" y="586.8" textLength="25.5" lengthAdjust="spacingAndGlyphs">100%</text>
<g><rect x="22.900" y="520.500" width="61" height="48" rx="4.500" fill="#ffffff" fill-opacity="0.450" stroke="#c6c6c6" stroke-width="1"/><rect x="26.300" y="523.400" width="54.300" height="41.600" rx="4.500" fill="#ffffff" fill-opacity="0.100" stroke="#bcbcbc" stroke-opacity="0.950" stroke-width="2.600"/><path d="M42.500 569v4h19v-4" fill="#f1f1f1" fill-opacity="0.800" stroke="#cfcfcf" stroke-width="1"/><path d="M52.500 549l-14-14" stroke="#b9b9b9" stroke-width="2.600" stroke-linecap="round"/><path d="M31 527.700l14.300 4.100-9.600 9.400z" fill="#b9b9b9"/><path d="M28.800 558l3-2.700v5.400zM60.900 558l-3.500-2.700v5.400z" fill="#dcdcdc"/></g>
<text x="91.500" y="553.700" font-size="28.500" font-weight="bold" textLength="51.500" lengthAdjust="spacingAndGlyphs" fill="#f4a3b1" fill-opacity="0.920" stroke="#f4a3b1" stroke-opacity="0.900" stroke-width="0.800" font-family="DejaVu Sans, Liberation Sans, sans-serif">OS</text>
<text x="155" y="556.500" font-size="31" font-weight="bold" textLength="117" lengthAdjust="spacingAndGlyphs" fill="#ffffff" fill-opacity="0.820" stroke="#b4b4b4" stroke-width="1.100" font-family="DejaVu Sans, Liberation Sans, sans-serif">Helper</text>
</svg>
</div>
</body>
</html>
